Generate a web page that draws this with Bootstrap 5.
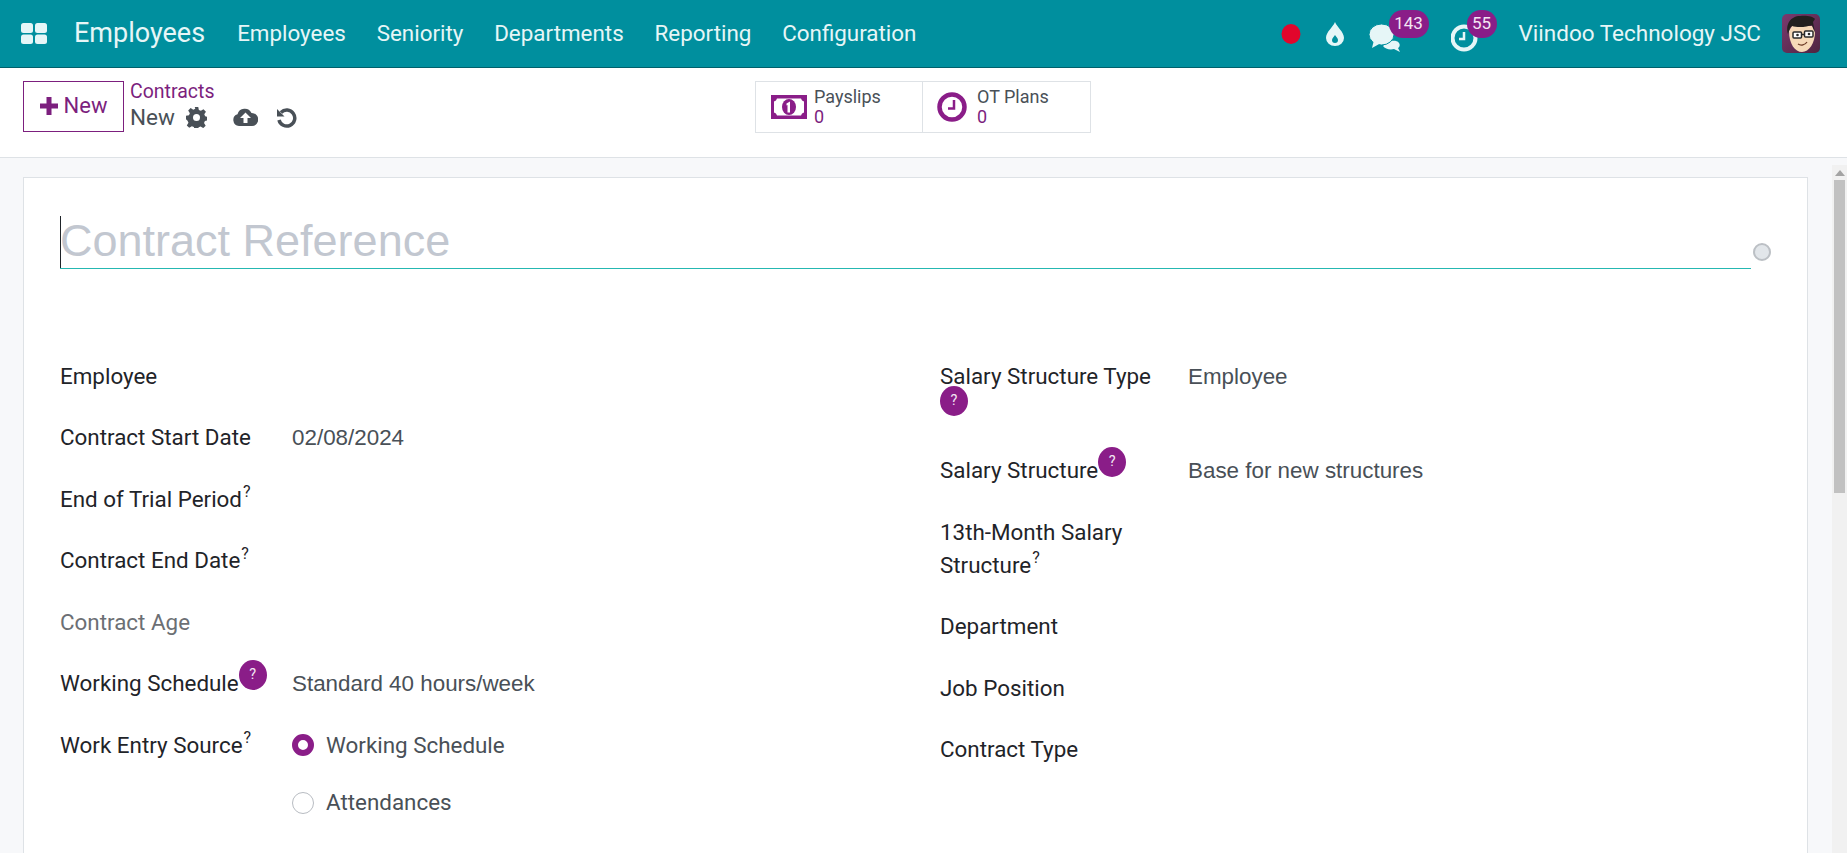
<!DOCTYPE html>
<html lang="en">
<head>
<meta charset="utf-8">
<title>Employees</title>
<link href="https://cdn.jsdelivr.net/npm/bootstrap@5.3.0/dist/css/bootstrap.min.css" rel="stylesheet">
<style>
html,body{height:100%;overflow:hidden}
body{font-family:Roboto,"Liberation Sans",sans-serif;font-size:22.4px;line-height:33px;color:#1f2429;background:#f7f8fa}
.shell{height:853px}
.topbar{height:68px;background:#008f9e;border-bottom:1px solid #00606b;color:#e6f6f7;padding:0 0 0 21px}
.apps{width:26px;height:21px;margin-right:27px;display:block}
.brandname{font-size:27px;margin-right:32px;color:#e6f6f7}
.menuitem{font-size:22.4px;color:#e6f6f7;margin-right:30.8px;text-decoration:none}
.sysicon{position:relative;display:block}
.cnt{position:absolute;background:#8a1d88;color:#f3e6f3;font-size:17px;line-height:27px;height:28px;border-radius:14px;text-align:center}
.company{font-size:22.5px;color:#e6f6f7}
.panel{height:90px;background:#fff;border-bottom:1px solid #dee2e6;padding:13px 0 0 23px}
.newbtn{width:101px;height:51px;border:1px solid #7c1f7e;border-radius:0;color:#7c1f7e;background:#fff;font-size:22px;line-height:1;padding:0 0 2px;margin-right:6px}
.crumbs{width:625px;line-height:1;margin-top:-1px}
.crumblink{display:block;font-size:19.5px;line-height:24px;color:#7c1f7e;text-decoration:none;margin-bottom:-2px}
.crumbnow{font-size:22.5px;line-height:30px;color:#495057}
.stat{width:168px;height:52px;border:1px solid #dee2e6;background:#fff;margin-right:-1px;padding:0 0 0 15px;color:#495057;font-size:18px;line-height:20px}
.stat-wide{width:169px;padding-left:14px}
.statnum{color:#7c1f7e;display:block;font-size:18px}
.stat svg{margin-right:7px}
.stat-wide svg{margin-right:10px}
.main{flex:1;min-height:0}
.canvas{flex:1;padding:19px 24px 0 23px;min-width:0}
.sheet{background:#fff;border:1px solid #dee2e6;border-bottom:0;height:100%;padding:30px 0 0 36px;position:relative}
.titlefield{width:1691px;height:61px;border-bottom:1px solid #25b8b2;font-family:"Liberation Sans",sans-serif;font-size:45px;line-height:66px;color:#c2c7d0;position:relative;white-space:nowrap}
.caret-bar{position:absolute;left:0;top:8px;width:1px;height:52px;background:#1f2429}
.dotmark{position:absolute;left:1729px;top:65px;width:18px;height:18px;border-radius:50%;background:#e2e6ea;border:2px solid #bcc0c5}
.formgrid{margin-top:90.6px}
.fieldcol-a{width:880px}
.fieldcol-b{width:800px}
.fieldrow{display:flex;margin-bottom:28.5px}
.lbl-a{width:232px;flex:none}
.lbl-b{width:248px;flex:none;padding-right:16px}
.muted-lbl{color:#6c6f74}
.val{font-family:"Liberation Sans",sans-serif;font-size:22.4px;color:#495057}
.qs{font-size:16px;line-height:1;vertical-align:super;position:relative;top:-1px;margin-left:1px}
.qbadge{display:inline-block;width:28px;height:30px;border-radius:50%;background:#8a1d88;color:#f3e6f3;font-size:14.5px;line-height:30px;text-align:center;vertical-align:top}
.qup{position:relative;top:-7px}
.radio-line{display:flex;align-items:center;color:#495057;height:33px;margin-bottom:24.5px}
.rad{width:22px;height:22px;border-radius:50%;margin-right:12px;flex:none}
.rad-on{border:6px solid #8a1d88;background:#fff}
.rad-off{border:1px solid #b8bcc2;background:#fff}
.vscroll{width:15px;background:#f1f1f1;margin-top:7px}
.vcap{height:15px}
.vthumb{height:313px;width:11px;margin-left:2px;background:#c1c1c1}
</style>
</head>
<body>
<div class="shell d-flex flex-column">
  <nav class="topbar d-flex align-items-center">
    <svg class="apps" viewBox="0 0 26 21" fill="#e6f6f7"><rect width="12" height="10" rx="2.5"/><rect x="14" width="12" height="10" rx="2.5"/><rect y="11.5" width="12" height="9.5" rx="2.5"/><rect x="14" y="11.5" width="12" height="9.5" rx="2.5"/></svg>
    <span class="brandname">Employees</span>
    <a class="menuitem" href="#">Employees</a>
    <a class="menuitem" href="#">Seniority</a>
    <a class="menuitem" href="#">Departments</a>
    <a class="menuitem" href="#">Reporting</a>
    <a class="menuitem" href="#">Configuration</a>
    <div class="ms-auto d-flex align-items-center">
      <svg class="sysicon" width="20" height="22" viewBox="0 0 20 22" style="margin-right:25px"><ellipse cx="10" cy="11" rx="9.5" ry="10" fill="#e2062c"/></svg>
      <svg class="sysicon" width="18" height="24" viewBox="0 0 18 24" style="margin-right:25px"><path d="M9 0C11 5 18 10 18 16A9 8 0 0 1 0 16C0 10 7 5 9 0Z" fill="#e6f6f7"/><path d="M9 13C10 15 12 16 12 18A3 3 0 0 1 6 18C6 16 8 15 9 13Z" fill="#008f9e"/></svg>
      <div class="sysicon" style="width:32px;height:28px;margin-right:50px">
        <svg width="32" height="28" viewBox="0 0 32 28"><path d="M19 17c5 0 9-1 11 2 2 3-1 5-1 5l2 4-6-3c-4 1-9 0-11-3z" fill="#e6f6f7"/><ellipse cx="12.5" cy="10.5" rx="12.5" ry="10.5" fill="#e6f6f7" stroke="#008f9e" stroke-width="1"/><path d="M5 16L3 24l9-5z" fill="#e6f6f7"/></svg>
        <span class="cnt" style="left:20px;top:-10px;width:40px">143</span>
      </div>
      <div class="sysicon" style="width:28px;height:28px;margin-right:40px">
        <svg width="28" height="28" viewBox="0 0 28 28"><circle cx="13" cy="14" r="11.5" fill="none" stroke="#e6f6f7" stroke-width="4"/><path d="M13 8v7h-5" fill="none" stroke="#e6f6f7" stroke-width="2.5"/></svg>
        <span class="cnt" style="left:16px;top:-10px;width:30px;">55</span>
      </div>
      <span class="company">Viindoo Technology JSC</span>
      <svg width="38" height="39" viewBox="0 0 38 39" style="margin-left:21px;margin-right:27px;display:block">
        <defs><linearGradient id="avbg" x1="0" y1="0" x2="1" y2="1"><stop offset="0" stop-color="#7a3a6f"/><stop offset="1" stop-color="#4f2440"/></linearGradient></defs>
        <rect width="38" height="39" rx="5" fill="url(#avbg)"/>
        <path d="M7 17c0 13 6 21 13 21s13-9 13-20l-3-6H10z" fill="#f6d9b8"/>
        <path d="M6 20C3 10 9 2 18 2c5-1 13 0 15 3l-2 3 2 11-3-8c-5 2-14 3-20 1l-2 2z" fill="#23201f"/>
        <rect x="11" y="18" width="8.500" height="6" rx="1" fill="#fff" stroke="#2a2a2a" stroke-width="1.500"/>
        <rect x="22.500" y="17" width="8.500" height="6" rx="1" fill="#fff" stroke="#2a2a2a" stroke-width="1.500"/>
        <path d="M19.500 20.500h3" stroke="#2a2a2a" stroke-width="1.500"/>
        <circle cx="15.500" cy="21" r="1.300" fill="#2a2a2a"/><circle cx="27" cy="20" r="1.300" fill="#2a2a2a"/>
        <path d="M16 30c3 2 7 1 9-2" fill="none" stroke="#6d3b26" stroke-width="1.300"/>
      </svg>
    </div>
  </nav>
  <div class="panel d-flex align-items-start">
    <button class="newbtn btn d-flex align-items-center justify-content-center" type="button">
      <svg width="18" height="18" viewBox="0 0 18 18" style="margin-right:6px"><path d="M6.500 0h5v6.500H18v5h-6.500V18h-5v-6.500H0v-5h6.500z" fill="#7c1f7e"/></svg>New
    </button>
    <div class="crumbs">
      <a class="crumblink" href="#">Contracts</a>
      <div class="d-flex align-items-center">
        <span class="crumbnow">New</span>
        <svg width="21" height="21" viewBox="0 0 24 24" style="margin-left:11px" fill="#495057"><path d="M10 0h4l.7 3.400 2.300 1 3-1.900 2.800 2.800-1.900 3 1 2.300 3.100.7v4l-3.400.7-1 2.300 1.900 3-2.800 2.800-3-1.900-2.300 1-.7 3.100h-4l-.7-3.400-2.300-1-3 1.900-2.800-2.800 1.900-3-1-2.300L0 14v-4l3.400-.7 1-2.300-1.900-3 2.800-2.800 3 1.900 2.300-1z"/><circle cx="12" cy="12" r="4" fill="#fff"/></svg>
        <svg width="25" height="18" viewBox="0 0 25 18" style="margin-left:26px"><path d="M6 18A6 6 0 0 1 4.500 6.300 7.500 7.500 0 0 1 18.500 5 6.500 6.500 0 0 1 19 18z" fill="#495057"/><path d="M12.500 4.500L18 10h-3.500v5h-4v-5H7z" fill="#fff"/></svg>
        <svg width="21" height="21" viewBox="0 0 21 21" style="margin-left:18px"><path d="M5 5.500A8 8 0 1 1 3 13" fill="none" stroke="#495057" stroke-width="3.500"/><path d="M1 2v7.500h7.500z" fill="#495057"/></svg>
      </div>
    </div>
    <div class="stat d-flex align-items-center">
      <svg width="36" height="24" viewBox="0 0 36 24"><rect width="36" height="24" fill="#8a1d88"/><path d="M6 3.500h24a4 4 0 0 0 3 3v11a4 4 0 0 0-3 3H6a4 4 0 0 0-3-3v-11a4 4 0 0 0 3-3z" fill="#fff"/><ellipse cx="18" cy="12" rx="7" ry="8" fill="#8a1d88"/><path d="M15.500 8.500l3.500-2v11h-2.500v-7.500l-1 .5z" fill="#fff"/></svg>
      <div><span>Payslips</span><span class="statnum">0</span></div>
    </div>
    <div class="stat stat-wide d-flex align-items-center">
      <svg width="30" height="30" viewBox="0 0 30 30"><circle cx="15" cy="15" r="12.500" fill="none" stroke="#8a1d88" stroke-width="4.500"/><path d="M17 8v8.500h-6" fill="none" stroke="#8a1d88" stroke-width="2.500"/></svg>
      <div><span>OT Plans</span><span class="statnum">0</span></div>
    </div>
  </div>
  <div class="main d-flex">
    <div class="canvas">
      <div class="sheet">
        <div class="titlefield"><span class="caret-bar"></span>Contract Reference</div>
        <span class="dotmark"></span>
        <div class="formgrid d-flex">
          <div class="fieldcol-a">
            <div class="fieldrow"><div class="lbl-a">Employee</div></div>
            <div class="fieldrow"><div class="lbl-a">Contract Start Date</div><div class="val">02/08/2024</div></div>
            <div class="fieldrow"><div class="lbl-a">End of Trial Period<span class="qs">?</span></div></div>
            <div class="fieldrow"><div class="lbl-a">Contract End Date<span class="qs">?</span></div></div>
            <div class="fieldrow"><div class="lbl-a muted-lbl">Contract Age</div></div>
            <div class="fieldrow"><div class="lbl-a">Working Schedule<span class="qbadge qup">?</span></div><div class="val">Standard 40 hours/week</div></div>
            <div class="fieldrow"><div class="lbl-a">Work Entry Source<span class="qs">?</span></div>
              <div>
                <div class="radio-line"><span class="rad rad-on"></span>Working Schedule</div>
                <div class="radio-line"><span class="rad rad-off"></span>Attendances</div>
              </div>
            </div>
          </div>
          <div class="fieldcol-b">
            <div class="fieldrow"><div class="lbl-b">Salary Structure Type <span class="qbadge qup">?</span></div><div class="val">Employee</div></div>
            <div class="fieldrow"><div class="lbl-b">Salary Structure<span class="qbadge qup">?</span></div><div class="val">Base for new structures</div></div>
            <div class="fieldrow"><div class="lbl-b">13th-Month Salary Structure<span class="qs">?</span></div></div>
            <div class="fieldrow"><div class="lbl-b">Department</div></div>
            <div class="fieldrow"><div class="lbl-b">Job Position</div></div>
            <div class="fieldrow"><div class="lbl-b">Contract Type</div></div>
          </div>
        </div>
      </div>
    </div>
    <div class="vscroll">
      <div class="vcap d-flex align-items-center justify-content-center"><svg width="10" height="6" viewBox="0 0 10 6"><path d="M0 6L5 0l5 6z" fill="#a3a3a3"/></svg></div>
      <div class="vthumb"></div>
    </div>
  </div>
</div>
<script src="https://cdn.jsdelivr.net/npm/bootstrap@5.3.0/dist/js/bootstrap.bundle.min.js"></script>
</body>
</html>
